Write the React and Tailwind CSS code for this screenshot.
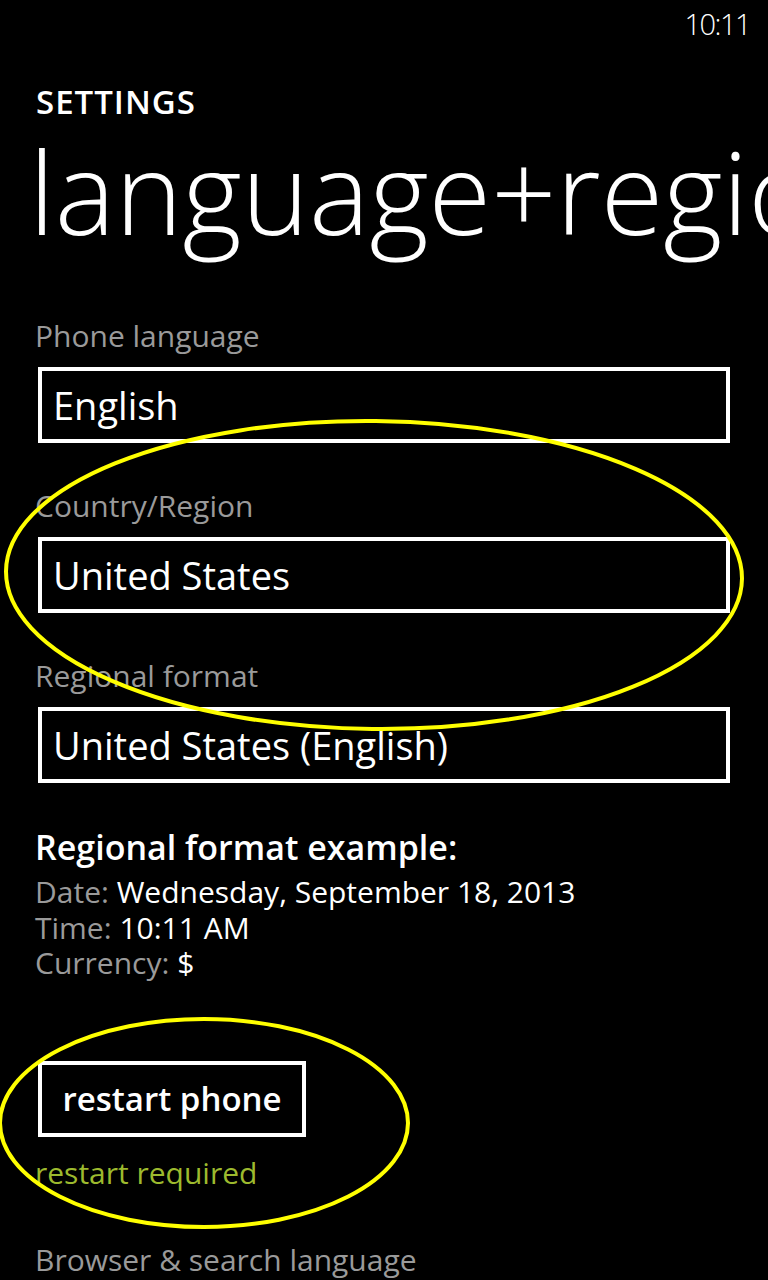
import React from 'react';

const FONT = { fontFamily: '"Open Sans", "Noto Sans", sans-serif' };

function Picker({ label, value, first }) {
  return (
    <div>
      <div className={`${first ? 'mt-[73px]' : 'mt-[48px]'} text-[30px] leading-[30px] text-[#9a9a9a]`}>{label}</div>
      <div className="mt-[16px] ml-[3px] w-[692px] h-[76px] border-4 border-white flex items-center pl-[11px]">
        <span className="text-[38px] leading-[38px] text-white">{value}</span>
      </div>
    </div>
  );
}

function Annotations() {
  // yellow marker circles drawn over the screenshot
  return (
    <svg className="absolute inset-0 pointer-events-none" width="768" height="1280" viewBox="0 0 768 1280">
      <ellipse cx="374" cy="575" rx="368" ry="154" fill="none" stroke="#ffff00" strokeWidth="4" transform="rotate(0.6 374 575)" />
      <ellipse cx="204" cy="1123" rx="204" ry="104" fill="none" stroke="#ffff00" strokeWidth="4" />
    </svg>
  );
}

export default function App() {
  return (
    <div className="relative w-[768px] h-[1280px] overflow-hidden bg-black text-white" style={FONT}>
      <div className="flex justify-end pt-[9px] pr-[18px]">
        <span className="text-[29px] leading-[30px] font-light tracking-[-1.5px]">10:11</span>
      </div>

      <div className="pl-[35px]">
        <div className="mt-[47px] ml-[1px] text-[33px] leading-[32px] font-semibold tracking-[1px]">SETTINGS</div>
        <div className="mt-[16px] -ml-[6px] text-[114px] leading-[114px] font-[350] whitespace-nowrap">
          language+region
        </div>

        <Picker label="Phone language" value="English" first />
        <Picker label="Country/Region" value="United States" />
        <Picker label="Regional format" value="United States (English)" />

        <div className="mt-[48px] text-[34px] leading-[33px] font-semibold">Regional format example:</div>
        <div className="mt-[10px] text-[30px] leading-[35.5px]">
          <div><span className="text-[#9a9a9a]">Date: </span>Wednesday, September 18, 2013</div>
          <div><span className="text-[#9a9a9a]">Time: </span>10:11 AM</div>
          <div><span className="text-[#9a9a9a]">Currency: </span>$</div>
        </div>

        <button
          type="button"
          className="mt-[80px] ml-[3px] w-[268px] h-[76px] border-4 border-white flex items-center justify-center text-[33px] leading-[32px] font-semibold text-white"
        >
          restart phone
        </button>
        <div className="mt-[21px] text-[30px] leading-[30px] text-[#9dba2e]">restart required</div>
        <div className="mt-[57px] text-[30px] leading-[30px] text-[#9a9a9a] whitespace-nowrap">Browser &amp; search language</div>
      </div>

      <Annotations />
    </div>
  );
}
